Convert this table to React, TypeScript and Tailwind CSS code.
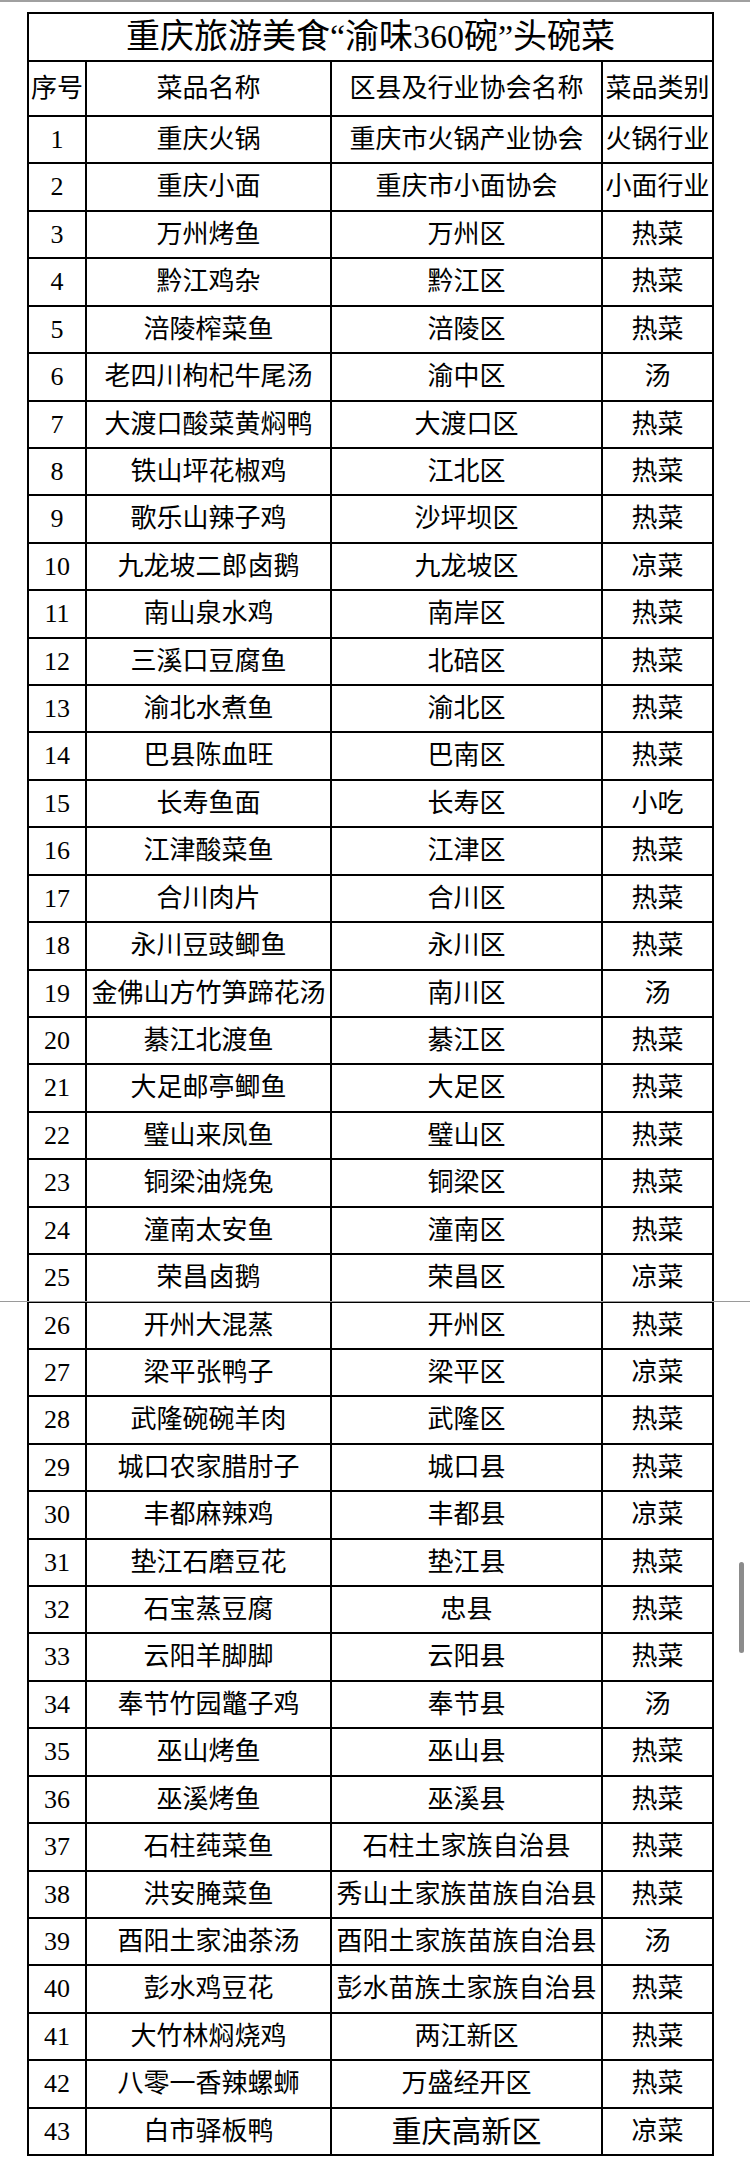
import React from "react";

type Row = [string, string, string];

const rows: Row[] = [
  ["重庆火锅", "重庆市火锅产业协会", "火锅行业"],
  ["重庆小面", "重庆市小面协会", "小面行业"],
  ["万州烤鱼", "万州区", "热菜"],
  ["黔江鸡杂", "黔江区", "热菜"],
  ["涪陵榨菜鱼", "涪陵区", "热菜"],
  ["老四川枸杞牛尾汤", "渝中区", "汤"],
  ["大渡口酸菜黄焖鸭", "大渡口区", "热菜"],
  ["铁山坪花椒鸡", "江北区", "热菜"],
  ["歌乐山辣子鸡", "沙坪坝区", "热菜"],
  ["九龙坡二郎卤鹅", "九龙坡区", "凉菜"],
  ["南山泉水鸡", "南岸区", "热菜"],
  ["三溪口豆腐鱼", "北碚区", "热菜"],
  ["渝北水煮鱼", "渝北区", "热菜"],
  ["巴县陈血旺", "巴南区", "热菜"],
  ["长寿鱼面", "长寿区", "小吃"],
  ["江津酸菜鱼", "江津区", "热菜"],
  ["合川肉片", "合川区", "热菜"],
  ["永川豆豉鲫鱼", "永川区", "热菜"],
  ["金佛山方竹笋蹄花汤", "南川区", "汤"],
  ["綦江北渡鱼", "綦江区", "热菜"],
  ["大足邮亭鲫鱼", "大足区", "热菜"],
  ["璧山来凤鱼", "璧山区", "热菜"],
  ["铜梁油烧兔", "铜梁区", "热菜"],
  ["潼南太安鱼", "潼南区", "热菜"],
  ["荣昌卤鹅", "荣昌区", "凉菜"],
  ["开州大混蒸", "开州区", "热菜"],
  ["梁平张鸭子", "梁平区", "凉菜"],
  ["武隆碗碗羊肉", "武隆区", "热菜"],
  ["城口农家腊肘子", "城口县", "热菜"],
  ["丰都麻辣鸡", "丰都县", "凉菜"],
  ["垫江石磨豆花", "垫江县", "热菜"],
  ["石宝蒸豆腐", "忠县", "热菜"],
  ["云阳羊脚脚", "云阳县", "热菜"],
  ["奉节竹园鼈子鸡", "奉节县", "汤"],
  ["巫山烤鱼", "巫山县", "热菜"],
  ["巫溪烤鱼", "巫溪县", "热菜"],
  ["石柱莼菜鱼", "石柱土家族自治县", "热菜"],
  ["洪安腌菜鱼", "秀山土家族苗族自治县", "热菜"],
  ["酉阳土家油茶汤", "酉阳土家族苗族自治县", "汤"],
  ["彭水鸡豆花", "彭水苗族土家族自治县", "热菜"],
  ["大竹林焖烧鸡", "两江新区", "热菜"],
  ["八零一香辣螺蛳", "万盛经开区", "热菜"],
  ["白市驿板鸭", "重庆高新区", "凉菜"],
];

const boundary = (i: number) => Math.round(116 + i * 47.42);

function rowHeightClass(i: number, last: boolean): string {
  const h = boundary(i + 1) - boundary(i);
  if (last) {
    return h === 48 ? "h-[46px]" : "h-[45px]";
  }
  return h === 48 ? "h-[48px]" : "h-[47px]";
}

const cellBase = "flex items-center justify-center whitespace-nowrap overflow-visible";

export default function App() {
  return (
    <div className="relative w-[750px] min-h-[2183px] bg-white text-black font-['Liberation_Serif','Noto_Sans_CJK_SC',serif]">
      <div className="h-[2px] w-full bg-[#a0a0a0]" />
      <div className="ml-[27px] mt-[10px] w-[687px] border-2 border-black">
        {/* Title */}
        <div className="flex h-[48px] items-center justify-center border-b-2 border-black text-[34px] leading-none">
          <span>重庆旅游美食“渝味360碗”头碗菜</span>
        </div>
        {/* Header */}
        <div className="grid h-[55px] grid-cols-[58px_245px_271px_109px] border-b-2 border-black text-[26px] leading-none">
          <div className={`${cellBase} border-r-2 border-black`}>序号</div>
          <div className={`${cellBase} border-r-2 border-black`}>菜品名称</div>
          <div className={`${cellBase} border-r-2 border-black`}>区县及行业协会名称</div>
          <div className={cellBase}>菜品类别</div>
        </div>
        {/* Body */}
        {rows.map((r, i) => {
          const last = i === rows.length - 1;
          return (
            <div
              key={i}
              className={`grid grid-cols-[58px_245px_271px_109px] text-[26px] leading-none ${rowHeightClass(i, last)} ${
                last ? "" : "border-b-2 border-black"
              }`}
            >
              <div className={`${cellBase} border-r-2 border-black`}>{i + 1}</div>
              <div className={`${cellBase} border-r-2 border-black`}>{r[0]}</div>
              <div className={`${cellBase} border-r-2 border-black ${last ? "text-[30px]" : ""}`}>{r[1]}</div>
              <div className={cellBase}>{r[2]}</div>
            </div>
          );
        })}
      </div>
      {/* page separator line */}
      <div className="pointer-events-none absolute left-0 top-[1301px] h-px w-full bg-[#9a9a9a]" />
      {/* scrollbar */}
      <div className="absolute left-[739px] top-[1562px] h-[91px] w-[5px] rounded-full bg-[#8c8c8c]" />
    </div>
  );
}
